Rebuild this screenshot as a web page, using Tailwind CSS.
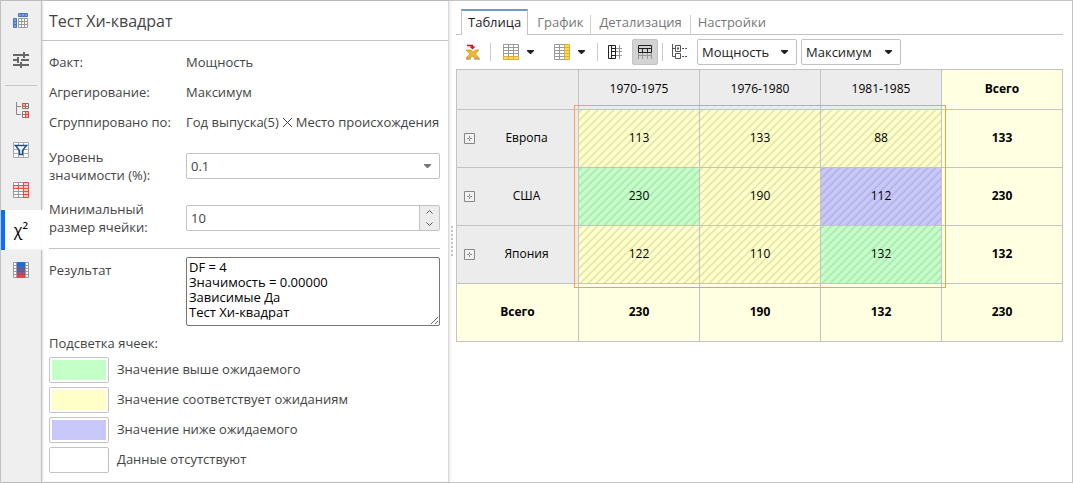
<!DOCTYPE html>
<html lang="ru">
<head>
<meta charset="utf-8">
<meta name="viewport" content="width=device-width, initial-scale=1">
<title>Тест Хи-квадрат</title>
<script src="https://cdn.jsdelivr.net/npm/@tailwindcss/browser@4"></script>
<style>
  .hatch {
    background-image: linear-gradient(135deg, rgb(0 0 0 / .13) 18%, transparent 18%, transparent 50%, rgb(0 0 0 / .13) 50%, rgb(0 0 0 / .13) 68%, transparent 68%);
    background-size: 8px 8px;
  }
</style>
</head>
<body class="bg-white font-['Open_Sans','Noto_Sans',sans-serif] text-[13px] leading-[18px] text-[#444]">
<svg class="hidden" aria-hidden="true">
  <symbol id="caret" viewBox="0 0 7 5"><path d="M0 0h7v1L4 4H3L0 1z" fill="currentColor"/></symbol>
  <symbol id="expand" viewBox="0 0 11 11"><path d="M.5 .5h10v10h-10z" fill="#f2f2f2" stroke="#888"/><path d="M5.500 3v2M5.500 6v2M3 5.500h2M6 5.500h2" stroke="#888"/></symbol>
</svg>
<div class="flex min-h-screen border border-[#c3c3c3]">

  <nav class="flex w-[41px] shrink-0 flex-col" aria-label="Разделы">
    <div class="border-r border-[#c3c3c3] bg-[#efefef] shadow-[1px_0_2px_rgba(0,0,0,0.12)]">
      <button class="flex h-[39px] w-10 items-start justify-center pt-3" aria-label="Структура">
        <svg class="size-4" viewBox="0 0 16 16"><path d="M5.500 .5h9v3h-9zM.5 5.500h3v9h-3z" fill="#7da4e0" stroke="#4a74bd"/><path d="M8.500 1v2M11.500 1v2M1 8.500h2M1 11.500h2" stroke="#4a74bd"/><path d="M5.500 5.500h9v9h-9zM8.500 5.500v9M11.500 5.500v9M5.500 8.500h9M5.500 11.500h9" fill="#fff" stroke="#999"/></svg>
      </button>
      <button class="flex h-10 w-10 items-center justify-center" aria-label="Параметры">
        <svg class="size-4" viewBox="0 0 16 16" fill="none" stroke="#686868" stroke-width="2"><path d="M0 3h10M11 3h5M11 0v6M0 8h5M8 8h8M5 5v6M0 13h7M9 13h7M8 10v6"/></svg>
      </button>
      <div class="mx-1 flex h-[10px] items-center"><div class="h-px w-8 bg-[#c6c6c6]"></div></div>
      <button class="flex h-10 w-10 items-center justify-center" aria-label="Иерархия">
        <svg class="size-4" viewBox="-3 0 16 16" fill="none"><path d="M.5 0v12.500H5M.5 4.500H5" stroke="#888"/><path d="M6.500 1.500h6v5h-6zM9.500 1.500v5M6.500 4.500h6M6.500 9.500h6v6h-6zM9.500 9.500v6M6.500 12.500h6" fill="#fff" stroke="#777"/><path d="M6.500 1.500h3v3h-3zM9.500 9.500h3v6h-3z" fill="#ffb0a8" stroke="#e94436"/><path d="M9.500 12.500h3" stroke="#e94436"/></svg>
      </button>
      <button class="flex h-10 w-10 items-center justify-center" aria-label="Фильтр">
        <svg class="size-4" viewBox="0 0 16 16" fill="none"><path d="M.5 .5h15v15H.5zM.5 3.500h15M.5 7.500h15M.5 11.500h15M5.500 .5v15M10.500 .5v15" fill="#fff" stroke="#aaa"/><path d="M2.500 3.500h11L9.500 8.500v4h-3v-4z" fill="#fff" stroke="#1b4f8f" stroke-width="1.500"/></svg>
      </button>
      <button class="flex h-10 w-10 items-center justify-center" aria-label="Итоги">
        <svg class="size-4" viewBox="0 0 16 16"><path d="M.5 .5h15v15H.5zM.5 9.500h15M.5 12.500h15M5.500 .5v15" fill="#fff" stroke="#999"/><path d="M.5 3.500h15v3H.5zM10.500 .5h5v15h-5z" fill="#ffc9c4" stroke="#f04a3c"/><path d="M5.500 3.500v3M10.500 9.500h5M10.500 12.500h5M10.500 3.500h5M10.500 6.500h5" stroke="#f04a3c"/></svg>
      </button>
    </div>
    <button class="flex h-10 items-center justify-center border-l-4 border-[#0a6cff] bg-white pr-[5px] text-[16px] text-black" aria-label="Хи-квадрат">χ²</button>
    <div class="flex-1 border-r border-[#c3c3c3] bg-[#efefef] shadow-[1px_0_2px_rgba(0,0,0,0.12)]">
      <button class="flex h-10 w-10 items-center justify-center" aria-label="Цветовая шкала">
        <svg class="size-4" viewBox="0 0 16 16"><path d="M.5 .5h15v15H.5zM.5 3.500h15M.5 6.500h15M.5 9.500h15M.5 12.500h15" fill="#fff" stroke="#999"/><path fill="#1273e0" d="M4 0h8v3H4z"/><path fill="#3a69c8" d="M4 3h8v3H4z"/><path fill="#6b5ba8" d="M4 6h8v3H4z"/><path fill="#a04e86" d="M4 9h8v3H4z"/><path fill="#ef4050" d="M4 12h8v4H4z"/><path d="M3.500 0v16M12.500 0v16" stroke="#999"/><path d="M4 3.500h8M4 6.500h8M4 9.500h8M4 12.500h8" stroke="#555" stroke-opacity=".45"/></svg>
      </button>
    </div>
  </nav>

  <section class="w-[407px] shrink-0 border-r border-[#d9d9d9] shadow-[1px_0_3px_rgba(0,0,0,0.12)]">
    <h1 class="flex h-10 items-center border-b border-[#c3c3c3] pl-[7px] text-[16px]">Тест Хи-квадрат</h1>
    <div class="pr-2 pl-[7px] pt-3">
      <dl class="grid grid-cols-[137px_1fr] gap-y-3">
        <dt>Факт:</dt><dd>Мощность</dd>
        <dt>Агрегирование:</dt><dd>Максимум</dd>
        <dt class="whitespace-nowrap">Сгруппировано по:</dt>
        <dd class="flex items-center gap-[3px] whitespace-nowrap">Год выпуска(5)<svg class="size-[11px]" viewBox="0 0 11 11" role="img" aria-label="×"><path d="M1 1l9 9M10 1L1 10" stroke="#444"/></svg>Место происхождения</dd>
      </dl>
      <div class="mt-[17px] grid grid-cols-[137px_1fr] items-center gap-y-4">
        <label for="level">Уровень<br>значимости (%):</label>
        <div class="relative">
          <select id="level" class="block h-[26px] w-full appearance-none rounded-[2px] border border-[#c3c3c3] bg-white px-1"><option>0.1</option></select>
          <svg class="pointer-events-none absolute top-[11px] right-[9px] h-[5px] w-[7px] text-[#777]"><use href="#caret"/></svg>
        </div>
        <label for="size">Минимальный<br>размер ячейки:</label>
        <div class="flex h-[26px] overflow-hidden rounded-[2px] border border-[#c3c3c3]">
          <input id="size" type="text" inputmode="numeric" value="10" class="min-w-0 flex-1 px-1">
          <div class="flex w-5 flex-col border-l border-[#c3c3c3] bg-[#ececec]">
            <button class="flex flex-1 items-center justify-center" aria-label="Увеличить"><svg class="h-1 w-[7px]" viewBox="0 0 7 4"><path d="M.5 3.500l3-3 3 3" fill="none" stroke="#555"/></svg></button>
            <button class="flex flex-1 items-center justify-center" aria-label="Уменьшить"><svg class="h-1 w-[7px]" viewBox="0 0 7 4"><path d="M.5 .5l3 3 3-3" fill="none" stroke="#555"/></svg></button>
          </div>
        </div>
      </div>
      <hr class="mt-3 border-[#c3c3c3]">
      <div class="mt-2 grid grid-cols-[137px_1fr]">
        <label for="result" class="pt-1">Результат</label>
        <textarea id="result" class="block h-[69px] w-full resize overflow-hidden rounded-[2px] border border-[#767676] px-[2px] py-[2px] leading-[15px] text-black">DF = 4
Значимость = 0.00000
Зависимые Да
Тест Хи-квадрат</textarea>
      </div>
      <h2 class="mt-2">Подсветка ячеек:</h2>
      <ul class="mt-[5px] flex flex-col gap-1 leading-6">
        <li class="flex items-start gap-2"><button class="h-[26px] w-[60px] rounded-[2px] border border-[#c3c3c3] p-[2px]" aria-label="Значение выше ожидаемого"><span class="block h-full bg-[#c4ffc8]"></span></button>Значение выше ожидаемого</li>
        <li class="flex items-start gap-2"><button class="h-[26px] w-[60px] rounded-[2px] border border-[#c3c3c3] p-[2px]" aria-label="Значение соответствует ожиданиям"><span class="block h-full bg-[#ffffc8]"></span></button>Значение соответствует ожиданиям</li>
        <li class="flex items-start gap-2"><button class="h-[26px] w-[60px] rounded-[2px] border border-[#c3c3c3] p-[2px]" aria-label="Значение ниже ожидаемого"><span class="block h-full bg-[#c8c8fa]"></span></button>Значение ниже ожидаемого</li>
        <li class="flex items-start gap-2"><button class="h-[26px] w-[60px] rounded-[2px] border border-[#c3c3c3] p-[2px]" aria-label="Данные отсутствуют"><span class="block h-full bg-white"></span></button>Данные отсутствуют</li>
      </ul>
    </div>
  </section>

  <div class="flex w-[7px] shrink-0 cursor-col-resize items-center pl-[2px]" role="separator" aria-orientation="vertical">
    <div class="h-8 w-[2px] bg-[repeating-linear-gradient(to_bottom,#c3c3c3_0_2px,transparent_2px_4px)]"></div>
  </div>

  <main class="min-w-0 flex-1 pt-2 pr-[9px]">
    <div class="flex h-[26px] items-stretch border-b border-[#c3c3c3] pl-[5px] text-[13px] text-[#777]" role="tablist">
      <button role="tab" aria-selected="true" class="-mb-px border-x border-t-2 border-x-[#c3c3c3] border-t-[#6e9bc5] bg-white px-[6px] pb-[2px] text-[#222]">Таблица</button>
      <button role="tab" class="mt-[6px] border-r border-[#d0d0d0] pr-[7px] pb-[5px] pl-[9px] leading-[14px]">График</button>
      <button role="tab" class="mt-[6px] border-r border-[#d0d0d0] pr-2 pb-[5px] pl-2 leading-[14px]">Детализация</button>
      <button role="tab" class="mt-[6px] pb-[5px] pl-[7px] leading-[14px]">Настройки</button>
    </div>
    <div class="mt-1 flex h-[26px] items-center text-[#222]" role="toolbar">
      <button class="ml-[9px] flex w-4 justify-center" aria-label="Экспорт в Excel">
        <svg class="size-4" viewBox="0 0 16 16"><path d="M1 6h5l2 2 2.500-2H14l-3.500 4 3.500 4H9.500L7.500 12 5.500 14H1L5 10z" fill="#f3b62e" stroke="#c99326" stroke-width=".7"/><path d="M1 15h5M9 15h6" stroke="#96703a"/><path d="M2 1.500h5.500v3M5.500 2.500l2 2 2-2" fill="none" stroke="#c4161c" stroke-width="1.300"/></svg>
      </button>
      <div class="ml-[9px] h-[18px] w-px bg-[#ccc]"></div>
      <button class="ml-3 flex items-center gap-2" aria-label="Итоги по строкам">
        <svg class="size-4" viewBox="0 0 16 16"><path d="M.5 .5h15v15H.5z" fill="#fff"/><path d="M1 13h14v3H1z" fill="#ffdc50"/><path d="M.5 .5h15v15H.5zM.5 3.500h15M.5 6.500h15M.5 9.500h15M5.500 .5v12M10.500 .5v12" fill="none" stroke="#999"/><path d="M0 12.500h16M.5 15.500h15M.5 12.500v3M15.500 12.500v3M5.500 13v2M10.500 13v2" stroke="#d9b040"/></svg>
        <svg class="h-[5px] w-[7px]"><use href="#caret"/></svg>
      </button>
      <button class="ml-5 flex items-center gap-2" aria-label="Итоги по столбцам">
        <svg class="size-4" viewBox="0 0 16 16"><path d="M.5 .5h15v15H.5z" fill="#fff"/><path d="M10.500 .5h5v15h-5z" fill="#ffdc50"/><path d="M.5 .5h10v15H.5zM.5 3.500h10M.5 6.500h10M.5 9.500h10M.5 12.500h10M5.500 .5v15" fill="none" stroke="#999"/><path d="M10.500 .5h5v15h-5zM10.500 3.500h5M10.500 6.500h5M10.500 9.500h5M10.500 12.500h5" fill="none" stroke="#d9b040"/></svg>
        <svg class="h-[5px] w-[7px]"><use href="#caret"/></svg>
      </button>
      <div class="ml-3 h-[18px] w-px bg-[#ccc]"></div>
      <button class="ml-1 flex size-[26px] items-center justify-center" aria-label="Заголовки строк">
        <svg class="size-[14px]" viewBox="0 0 14 14" fill="none"><path d="M7.500 3.500H14M7.500 6.500H14M7.500 10.500H14M11.500 0v14" stroke="#999"/><path d="M.5 .5h7v13h-7zM3.500 .5v13M3.500 3.500h4M3.500 6.500h4M3.500 10.500h4" stroke="#222"/></svg>
      </button>
      <button class="ml-1 flex size-[26px] items-center justify-center rounded-[2px] border border-[#c3c3c3] bg-[#d3d3d3]" aria-label="Заголовки столбцов" aria-pressed="true">
        <svg class="size-[14px]" viewBox="0 0 14 14" fill="none"><path d="M.5 8v6M4.500 8v6M9.500 8v6M13.500 8v6M0 10.500h14" stroke="#999"/><path d="M.5 .5h13v7H.5zM.5 3.500h13M4.500 3.500v4M9.500 3.500v4" stroke="#222"/></svg>
      </button>
      <div class="ml-1 h-[18px] w-px bg-[#ccc]"></div>
      <button class="ml-[9px]" aria-label="Дерево">
        <svg class="size-4" viewBox="0 0 16 16" fill="none" stroke="#555"><path d="M.5 0v12.500H3M.5 4.500H3M3.500 1.500h5v6h-5zM3.500 9.500h5v5h-5z"/><path d="M5 4.500h2" stroke-width="2"/><path d="M10 4.500h6M10 12.500h6" stroke-dasharray="2 1"/></svg>
      </button>
      <div class="relative ml-[9px]">
        <select aria-label="Факт" class="block h-[26px] w-[100px] appearance-none rounded-[2px] border border-[#c3c3c3] bg-white px-1"><option>Мощность</option></select>
        <svg class="pointer-events-none absolute top-[11px] right-[9px] h-[5px] w-[7px]"><use href="#caret"/></svg>
      </div>
      <div class="relative ml-1">
        <select aria-label="Агрегирование" class="block h-[26px] w-[100px] appearance-none rounded-[2px] border border-[#c3c3c3] bg-white px-1"><option>Максимум</option></select>
        <svg class="pointer-events-none absolute top-[11px] right-[9px] h-[5px] w-[7px]"><use href="#caret"/></svg>
      </div>
    </div>

    <div class="relative mt-1">
      <table class="w-full table-fixed border-collapse text-center text-[12px] text-black [&_td]:border [&_td]:border-[#c3c3c3] [&_td]:px-0 [&_td]:pt-0 [&_td]:pb-[2px] [&_th]:border [&_th]:border-[#c3c3c3] [&_th]:px-0 [&_th]:pt-0 [&_th]:pb-[2px]">
        <colgroup><col class="w-[122px]"><col span="4"></colgroup>
        <thead>
          <tr class="h-10 bg-[#ececec]">
            <td></td><th class="font-normal">1970-1975</th><th class="font-normal">1976-1980</th><th class="font-normal">1981-1985</th><th class="bg-[#ffffe1] font-bold">Всего</th>
          </tr>
        </thead>
        <tbody>
          <tr class="h-[58px]">
            <th class="bg-[#ececec] font-normal"><div class="flex items-center pr-1 pl-[7px]"><button aria-label="Развернуть"><svg class="mt-[2px] size-[11px]"><use href="#expand"/></svg></button><span class="flex-1 pl-1">Европа</span></div></th>
            <td class="hatch bg-[#ffffc8]">113</td><td class="hatch bg-[#ffffc8]">133</td><td class="hatch bg-[#ffffc8]">88</td><td class="bg-[#ffffe1] font-bold">133</td>
          </tr>
          <tr class="h-[58px]">
            <th class="bg-[#ececec] font-normal"><div class="flex items-center pr-1 pl-[7px]"><button aria-label="Развернуть"><svg class="mt-[2px] size-[11px]"><use href="#expand"/></svg></button><span class="flex-1 pl-1">США</span></div></th>
            <td class="hatch bg-[#c4ffc8]">230</td><td class="hatch bg-[#ffffc8]">190</td><td class="hatch bg-[#c8c8fa]">112</td><td class="bg-[#ffffe1] font-bold">230</td>
          </tr>
          <tr class="h-[58px]">
            <th class="bg-[#ececec] font-normal"><div class="flex items-center pr-1 pl-[7px]"><button aria-label="Развернуть"><svg class="mt-[2px] size-[11px]"><use href="#expand"/></svg></button><span class="flex-1 pl-1">Япония</span></div></th>
            <td class="hatch bg-[#ffffc8]">122</td><td class="hatch bg-[#ffffc8]">110</td><td class="hatch bg-[#c4ffc8]">132</td><td class="bg-[#ffffe1] font-bold">132</td>
          </tr>
        </tbody>
        <tfoot>
          <tr class="h-[58px] bg-[#ffffe1] font-bold"><th>Всего</th><td>230</td><td>190</td><td>132</td><td>230</td></tr>
        </tfoot>
      </table>
      <div class="pointer-events-none absolute top-9 right-[calc((100%-122px)/4-4px)] bottom-[54px] left-[118px] border border-[#f5a33c]"></div>
    </div>
  </main>
</div>
</body>
</html>
